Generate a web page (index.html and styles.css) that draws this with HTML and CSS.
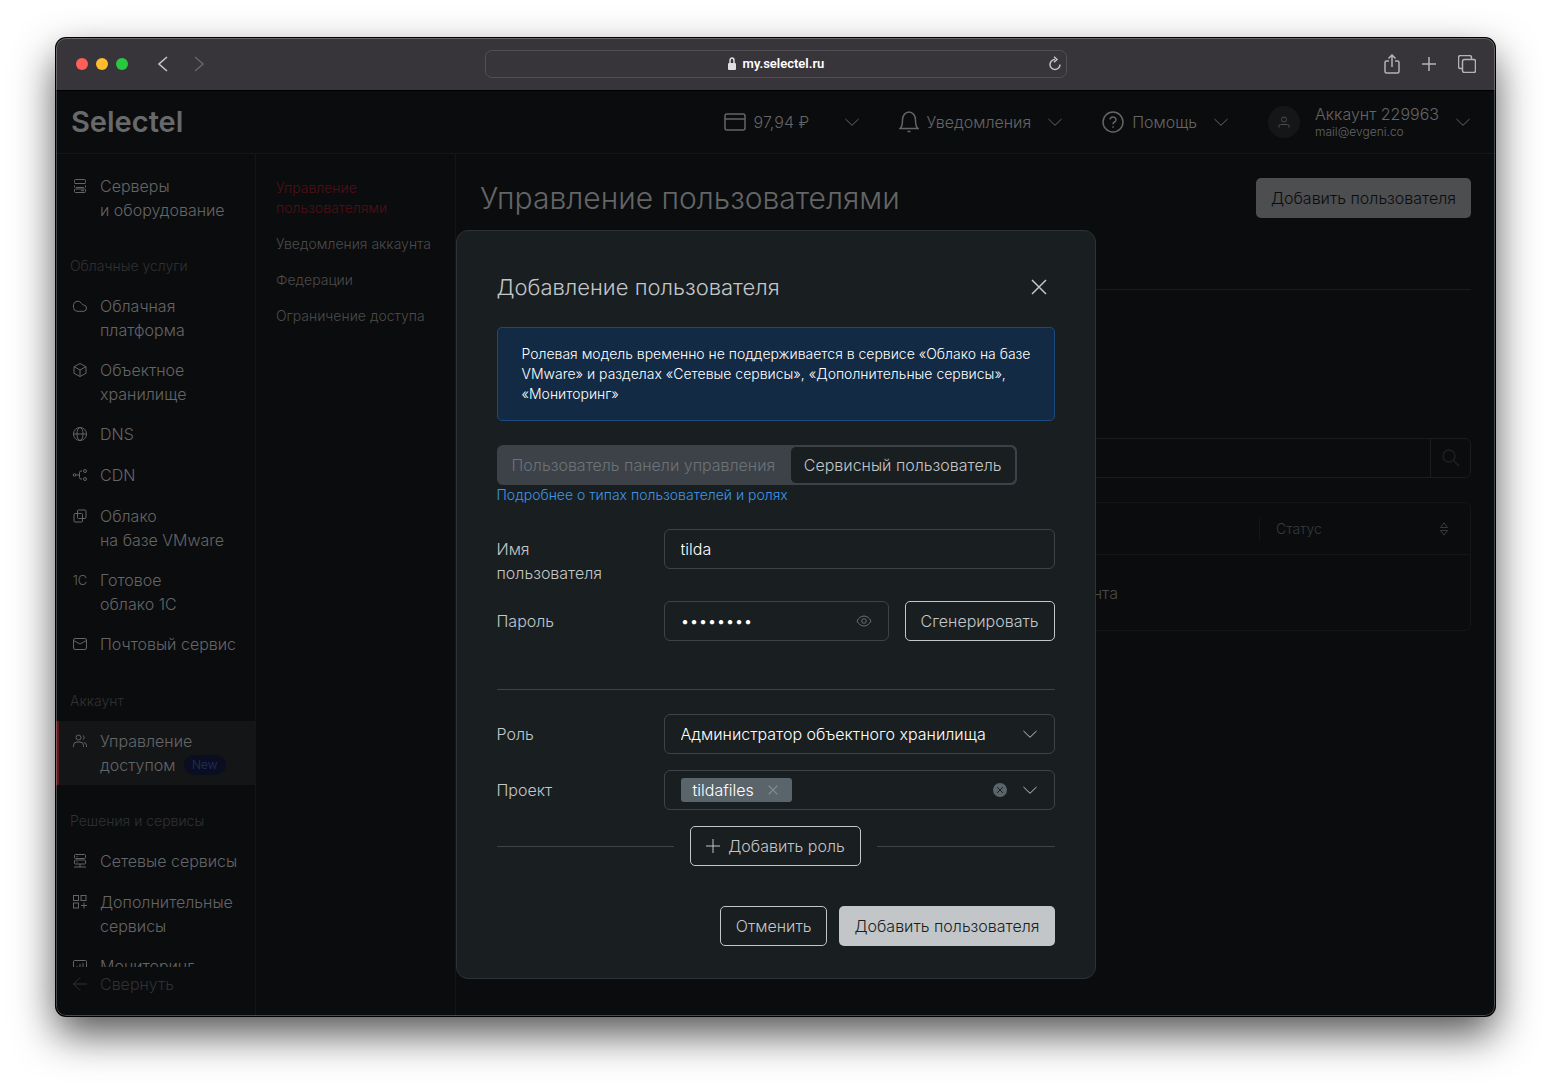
FILE: index.html
```html
<!DOCTYPE html>
<html lang="ru">
<head>
<meta charset="utf-8">
<meta name="viewport" content="width=device-width, initial-scale=1">
<title>Управление пользователями</title>
<link rel="stylesheet" href="styles.css">
</head>
<body>
<svg class="sprite" aria-hidden="true">
  <symbol id="chevron" viewBox="0 0 14 8"><path d="M.5 1L7 7.300 13.500 1"/></symbol>
  <symbol id="cross" viewBox="0 0 16 16"><path d="M1 1l14 14M15 1L1 15"/></symbol>
  <symbol id="plus" viewBox="0 0 14 14"><path d="M7 0v14M0 7h14"/></symbol>
</svg>
<div class="window">
  <div class="toolbar">
    <div class="toolbar-side">
      <span class="lights"><i class="light red"></i><i class="light yellow"></i><i class="light green"></i></span>
      <button class="tool" aria-label="Назад"><svg width="10" height="16" viewBox="0 0 10 16"><path d="M9 1L1 8l8 7"/></svg></button>
      <button class="tool tool-off" aria-label="Вперёд"><svg width="10" height="16" viewBox="0 0 10 16"><path d="M1 1l8 7-8 7"/></svg></button>
    </div>
    <div class="address">
      <span></span>
      <span class="host"><svg class="lock" width="8" height="14" viewBox="0 0 8 14"><rect x="0" y="6" width="8" height="7" rx="1"/><path d="M2 6V3.500a2 2.500 0 0 1 4 0V6"/></svg>my.selectel.ru</span>
      <button class="tool reload" aria-label="Обновить"><svg width="12" height="16" viewBox="0 0 12 16"><path d="M6 3.500a5 5 0 1 0 5 5M5 .8l3 2.700-3 2.700"/></svg></button>
    </div>
    <div class="toolbar-side toolbar-end">
      <button class="tool" aria-label="Поделиться"><svg width="16" height="20" viewBox="0 0 16 20"><path d="M5 7H2.500A1.500 1.500 0 0 0 1 8.500v9A1.500 1.500 0 0 0 2.500 19h11a1.500 1.500 0 0 0 1.500-1.500v-9A1.500 1.500 0 0 0 13.500 7H11M8 13V1M4.500 4.500L8 1l3.500 3.500"/></svg></button>
      <button class="tool" aria-label="Новая вкладка"><svg width="14" height="14"><use href="#plus"/></svg></button>
      <button class="tool" aria-label="Вкладки"><svg width="18" height="18" viewBox="0 0 18 18"><rect x="4.500" y="4.500" width="13" height="13" rx="2"/><path d="M4.500 13.500H2.500a2 2 0 0 1-2-2v-9a2 2 0 0 1 2-2h9a2 2 0 0 1 2 2v2"/></svg></button>
    </div>
  </div>

  <div class="app">
    <header class="header">
      <a class="logo" href="#">Selectel</a>
      <nav class="header-nav">
        <button class="header-item"><svg width="22" height="18" viewBox="0 0 22 18"><rect x="1" y="1" width="20" height="16" rx="2"/><path d="M1 6h20"/></svg><span class="balance">97,94 ₽</span><svg width="14" height="8"><use href="#chevron"/></svg></button>
        <button class="header-item"><svg width="20" height="22" viewBox="0 0 20 22"><path d="M1 17.500c2-1.500 2.500-3.500 2.500-8.500a6.500 8 0 0 1 13 0c0 5 .5 7 2.500 8.500zM8.500 20.500h3"/></svg><span>Уведомления</span><svg width="14" height="8"><use href="#chevron"/></svg></button>
        <button class="header-item"><svg width="22" height="22" viewBox="0 0 22 22"><circle cx="11" cy="11" r="10"/><path d="M8 8.500a3 2.700 0 1 1 4.500 2.500c-1 .6-1.500 1-1.500 2.200M11 15.200v1.600"/></svg><span>Помощь</span><svg width="14" height="8"><use href="#chevron"/></svg></button>
        <button class="header-item account"><span class="avatar"><svg width="12" height="12" viewBox="0 0 12 12"><circle cx="6" cy="3.500" r="2.500"/><path d="M1 11.500V10a1.500 1.500 0 0 1 1.500-1.500h7A1.500 1.500 0 0 1 11 10v1.500"/></svg></span><span class="account-text">Аккаунт 229963<small>mail@evgeni.co</small></span><svg width="14" height="8"><use href="#chevron"/></svg></button>
      </nav>
    </header>

    <div class="columns">
      <aside class="sidebar">
        <nav class="menu">
          <a class="menu-item" href="#"><svg width="16" height="16" viewBox="0 0 16 16"><path d="M2.500 4.500v-2a1 1 0 0 1 1-1h9a1 1 0 0 1 1 1v2M2.500 5.500h11M2.500 9.500v-2M13.500 9.500v-2M4 9.500h8M3.500 11h9a1 1 0 0 1 1 1v1.500a1 1 0 0 1-1 1h-9a1 1 0 0 1-1-1V12a1 1 0 0 1 1-1zM9 12.700h3"/></svg><span>Серверы<br>и оборудование</span></a>
          <h2 class="menu-title">Облачные услуги</h2>
          <a class="menu-item" href="#"><svg width="16" height="16" viewBox="0 0 16 16"><path d="M5 13.300a4 4 0 0 1-3.500-4V6.500A4.300 4.300 0 0 1 9.500 5.500c.5 1 1.200 1.300 2.200 1.500a3.200 3.200 0 0 1 .3 6.300z"/></svg><span>Облачная<br>платформа</span></a>
          <a class="menu-item" href="#"><svg width="16" height="16" viewBox="0 0 16 16"><path d="M8 1.500l6 3.200v6.600l-6 3.200-6-3.200V4.700zM2 4.700l6 3.300 6-3.300M8 8v6.500"/></svg><span>Объектное<br>хранилище</span></a>
          <a class="menu-item" href="#"><svg width="16" height="16" viewBox="0 0 16 16"><circle cx="8" cy="8" r="6.500"/><ellipse cx="8" cy="8" rx="3" ry="6.500"/><path d="M1.500 8h13"/></svg><span>DNS</span></a>
          <a class="menu-item" href="#"><svg width="16" height="16" viewBox="0 0 16 16"><circle cx="2.500" cy="8" r="1.300"/><circle cx="13" cy="4" r="1.500"/><circle cx="13" cy="12" r="1.500"/><path d="M4 8h3.500M10 4H9a1.500 1.500 0 0 0-1.500 1.500v5A1.500 1.500 0 0 0 9 12h1"/></svg><span>CDN</span></a>
          <a class="menu-item" href="#"><svg width="16" height="16" viewBox="0 0 16 16"><rect x="5.500" y="2" width="8.500" height="8.500" rx="1"/><rect x="2" y="5.500" width="8.500" height="8.500" rx="1"/></svg><span>Облако<br>на базе VMware</span></a>
          <a class="menu-item" href="#"><span class="glyph">1С</span><span>Готовое<br>облако 1С</span></a>
          <a class="menu-item" href="#"><svg width="16" height="16" viewBox="0 0 16 16"><rect x="1.500" y="2.500" width="13" height="11" rx="1.500"/><path d="M1.500 4.500L8 8l6.500-3.500"/></svg><span>Почтовый сервис</span></a>
          <h2 class="menu-title">Аккаунт</h2>
          <a class="menu-item active" href="#"><svg width="16" height="16" viewBox="0 0 16 16"><circle cx="6.500" cy="4.500" r="2.500"/><path d="M1.500 14v-1.500a3.500 3.500 0 0 1 3.500-3.500h3a3.500 3.500 0 0 1 3.500 3.500V14M11 2.500c1.500.5 1.500 3.500 0 4M12 9.500a3 3 0 0 1 2.500 3V14"/></svg><span>Управление<br>доступом <span class="badge">New</span></span></a>
          <h2 class="menu-title">Решения и сервисы</h2>
          <a class="menu-item" href="#"><svg width="16" height="16" viewBox="0 0 16 16"><rect x="2.500" y="1.500" width="11" height="4" rx="1"/><rect x="2.500" y="7" width="11" height="4" rx="1"/><path d="M4.500 3.500h1M4.500 9h1M8 11v3M2 14h12"/></svg><span>Сетевые сервисы</span></a>
          <a class="menu-item" href="#"><svg width="16" height="16" viewBox="0 0 16 16"><rect x="1.500" y="1.500" width="5" height="5"/><rect x="9" y="1.500" width="5" height="5"/><rect x="1.500" y="9" width="5" height="5"/><path d="M12 8.500v6M9 11.500h6"/></svg><span>Дополнительные<br>сервисы</span></a>
          <a class="menu-item" href="#"><svg width="16" height="16" viewBox="0 0 16 16"><rect x="1.500" y="2.500" width="13" height="11" rx="1"/><path d="M5 11V8M8 11V6M11 11V5"/></svg><span>Мониторинг</span></a>
        </nav>
        <button class="collapse"><svg width="16" height="16" viewBox="0 0 16 16"><path d="M15 8H1.500M8 1.500L1.500 8 8 14.500"/></svg>Свернуть</button>
      </aside>
      <nav class="submenu">
        <a class="current" href="#">Управление пользователями</a>
        <a href="#">Уведомления аккаунта</a>
        <a href="#">Федерации</a>
        <a href="#">Ограничение доступа</a>
      </nav>
      <main class="main">
        <div class="page-head">
          <h1>Управление пользователями</h1>
          <button class="button button-dim">Добавить пользователя</button>
        </div>
        <div class="tabs-line"></div>
        <form class="search">
          <input type="search" aria-label="Поиск">
          <button type="button" aria-label="Найти"><svg width="18" height="18" viewBox="0 0 18 18"><circle cx="7" cy="7" r="6"/><path d="M11.500 11.500L17 17"/></svg></button>
        </form>
        <table class="users">
          <thead><tr><th></th><th class="status"><div>Статус<svg width="10" height="14" viewBox="0 0 10 14"><path d="M5 .8L8.500 5.500h-7zM5 13.200L8.500 8.500h-7z"/></svg></div></th></tr></thead>
          <tbody><tr><td class="owner">аккаунта</td><td></td></tr></tbody>
        </table>
      </main>
    </div>

    <div class="overlay">
      <form class="modal" role="dialog" aria-labelledby="modal-title">
        <div class="modal-head">
          <h2 id="modal-title">Добавление пользователя</h2>
          <button type="button" class="close" aria-label="Закрыть"><svg width="16" height="16"><use href="#cross"/></svg></button>
        </div>
        <p class="notice">Ролевая модель временно не поддерживается в сервисе «Облако на базе VMware» и разделах «Сетевые сервисы», «Дополнительные сервисы», «Мониторинг»</p>
        <div class="segment">
          <label><input type="radio" name="kind">Пользователь панели управления</label>
          <label><input type="radio" name="kind" checked>Сервисный пользователь</label>
        </div>
        <a class="more" href="#">Подробнее о типах пользователей и ролях</a>
        <div class="rows">
          <div class="row">
            <label for="name">Имя<br>пользователя</label>
            <input class="field" id="name" type="text" value="tilda">
          </div>
          <div class="row">
            <label for="password">Пароль</label>
            <div class="password">
              <div class="field field-group">
                <input id="password" type="password" value="abcdefgh">
                <button type="button" class="eye" aria-label="Показать пароль"><svg width="16" height="12" viewBox="0 0 16 12"><path d="M1 6c1.500-3 4-5 7-5s5.500 2 7 5c-1.500 3-4 5-7 5S2.500 9 1 6z"/><circle cx="8" cy="6" r="2.300"/></svg></button>
              </div>
              <button type="button" class="button button-line">Сгенерировать</button>
            </div>
          </div>
        </div>
        <hr>
        <div class="rows">
          <div class="row">
            <label for="role">Роль</label>
            <div class="field field-group">
              <select id="role"><option>Администратор объектного хранилища</option></select>
              <svg class="arrow" width="14" height="8"><use href="#chevron"/></svg>
            </div>
          </div>
          <div class="row">
            <label for="project">Проект</label>
            <div class="field field-group">
              <span class="tag">tildafiles<button type="button" aria-label="Убрать tildafiles"><svg width="10" height="10" viewBox="0 0 16 16"><use href="#cross"/></svg></button></span>
              <input id="project" type="text">
              <button type="button" class="clear" aria-label="Очистить"><svg width="14" height="14" viewBox="0 0 14 14"><circle cx="7" cy="7" r="7"/><path d="M4 4l6 6M10 4l-6 6"/></svg></button>
              <svg class="arrow" width="14" height="8"><use href="#chevron"/></svg>
            </div>
          </div>
        </div>
        <div class="add-role"><button type="button" class="button button-line"><svg width="14" height="14"><use href="#plus"/></svg>Добавить роль</button></div>
        <div class="actions">
          <button type="button" class="button button-line">Отменить</button>
          <button type="button" class="button button-main">Добавить пользователя</button>
        </div>
      </form>
    </div>
  </div>
</div>
</body>
</html>
```
FILE: styles.css
```css
*, *::before, *::after { box-sizing: border-box; }

body {
  margin: 0;
  padding: 38px 56px 74px;
  background: #fff;
  font: 300 16px/24px Inter, "Noto Sans", sans-serif;
  color: #646566;
}

h1, h2, p { margin: 0; font-weight: 300; }
a { color: inherit; text-decoration: none; }
button, input, select { font: inherit; color: inherit; background: none; border: 0; padding: 0; margin: 0; outline: 0; }
svg { flex: none; fill: none; stroke: currentColor; display: block; }
.sprite { position: absolute; width: 0; height: 0; }

/* Browser window */
.window {
  position: relative;
  height: calc(100vh - 112px);
  min-height: 600px;
  display: flex;
  flex-direction: column;
  border-radius: 10px;
  overflow: hidden;
  background: #0b0c0e;
  box-shadow: 0 0 0 1px #000, 0 18px 42px rgba(0, 0, 0, .68);
}
.window::after {
  content: "";
  position: absolute;
  inset: 0;
  border: 1px solid rgba(255, 255, 255, .25);
  border-radius: 10px;
  pointer-events: none;
}
.toolbar {
  flex: none;
  display: grid;
  grid-template-columns: 1fr minmax(0, 582px) 1fr;
  align-items: center;
  height: 53px;
  padding: 0 19px 0 20px;
  background: #38353a;
  border-bottom: 1px solid #000;
}
.toolbar-side { display: flex; align-items: center; gap: 26px; }
.toolbar-end { justify-content: flex-end; gap: 22px; }
.tool { color: #c4c2c5; stroke-width: 1.6; }
.toolbar-end .tool { stroke-width: 1.5; color: #b4b2b5; }
.tool.tool-off { color: #656267; }
.lights { display: flex; gap: 8px; margin-right: 4px; }
.light { width: 12px; height: 12px; border-radius: 50%; }
.red { background: #ff5f57; }
.yellow { background: #febc2e; }
.green { background: #28c840; }
.address {
  display: grid;
  grid-template-columns: 1fr auto 1fr;
  align-items: center;
  height: 28px;
  padding: 0 5px;
  border: 1px solid #525055;
  border-radius: 7px;
}
.host { display: flex; align-items: center; gap: 7px; font: 600 13px/20px Roboto, sans-serif; color: #fff; }
.lock { color: #dedede; fill: #dedede; }
.lock path { fill: none; stroke-width: 1.5; }
.lock rect { stroke: none; }
.reload { justify-self: end; stroke-width: 1.5; }

/* Application */
.app { position: relative; flex: 1; min-height: 0; display: flex; flex-direction: column; }
.header {
  flex: none;
  display: flex;
  justify-content: space-between;
  align-items: center;
  height: 63px;
  padding: 0 25px 0 15px;
  border-bottom: 1px solid #151618;
}
.logo { font-size: 29px; line-height: 32px; font-weight: 600; color: #68696a; }
.header-nav { display: flex; align-items: center; gap: 40px; }
.header-item { display: flex; align-items: center; white-space: nowrap; }
.header-item > svg:first-child { margin-right: 8px; stroke-width: 1.5; }
.header-item > svg:last-child { margin-left: 17px; }
.balance { min-width: 74px; text-align: left; }
.avatar { display: grid; place-items: center; width: 32px; height: 32px; margin-right: 15px; border-radius: 50%; background: #151618; color: #4c4d4e; }
.account-text { line-height: 20px; text-align: left; }
.account-text small { display: block; font-size: 12px; line-height: 16px; }

.columns { flex: 1; min-height: 0; display: flex; }
.sidebar { flex: none; width: 200px; display: flex; flex-direction: column; border-right: 1px solid #151618; }
.menu { flex: 1; min-height: 0; overflow: hidden; padding-top: 12px; }
.menu-item { display: flex; gap: 12px; min-height: 41px; padding: 8px 0 8px 16px; white-space: nowrap; }
.menu-item > svg { margin-top: 4px; }
.glyph { width: 16px; font-size: 13px; text-align: center; }
.menu-title { padding: 26px 14px 10px; font-size: 14px; line-height: 20px; color: #303133; }
.active { padding-left: 13px; border-left: 3px solid #5c171c; background: #141517; }
.badge { display: inline-block; vertical-align: top; margin: 2px 0 2px 4px; padding: 0 8px; border-radius: 10px; background: #0a0e20; color: #22306b; font-size: 12px; line-height: 20px; }
.collapse { display: flex; align-items: center; gap: 12px; padding: 5px 16px 20px; color: #303133; }

.submenu { flex: none; width: 200px; display: flex; flex-direction: column; gap: 16px; padding: 24px 20px; border-right: 1px solid #151618; font-size: 14px; line-height: 20px; color: #4a4b4c; white-space: nowrap; }
.submenu .current { color: #4f1116; white-space: normal; }

.main { flex: 1; min-width: 0; padding: 24px; }
.page-head { display: flex; align-items: center; justify-content: space-between; }
h1 { font-size: 30px; line-height: 40px; }
.tabs-line { height: 72px; border-bottom: 1px solid #1b1c1e; }
.search { display: flex; margin-top: 148px; height: 40px; border: 1px solid #1b1c1e; border-radius: 6px; }
.search input { flex: 1; min-width: 0; }
.search button { width: 40px; display: grid; place-items: center; border-left: 1px solid #1b1c1e; color: #1f2022; stroke-width: 1.5; }
.users { width: 100%; margin-top: 24px; border: 1px solid #151618; border-radius: 6px; border-spacing: 0; table-layout: fixed; }
.users th { height: 52px; padding: 0; font-weight: 300; font-size: 14px; text-align: left; border-bottom: 1px solid #151618; color: #3a3b3c; }
.status { width: 211px; }
.status div { display: flex; justify-content: space-between; align-items: center; padding: 0 21px 0 16px; border-left: 1px solid #151618; }
.users td { height: 75px; padding: 0; color: #4a4b4c; }
.users .owner { padding-right: 141px; text-align: right; }

.button { height: 40px; display: inline-flex; align-items: center; justify-content: center; gap: 8px; padding: 0 15px; border: 0; border-radius: 5px; white-space: nowrap; }
.button-dim { background: #4d4e50; color: #0b0c0e; }
.button-line { border: 1px solid #c3c6c9; }
.button-main { background: #c3c6c9; color: #191e20; }

/* Dialog */
.overlay { position: absolute; inset: 0; display: flex; justify-content: center; align-items: flex-start; padding-top: 139px; }
.modal { width: 640px; max-width: 100%; padding: 40px 40px 32px; border: 1px solid #2c3235; border-radius: 12px; background: #191e20; color: #c3c6c9; }
.modal-head { display: flex; justify-content: space-between; align-items: center; }
.modal-head h2 { font-size: 22px; line-height: 32px; }
.close { width: 32px; height: 32px; display: grid; place-items: center; stroke-width: 1.5; }
.notice { margin: 24px 0; padding: 16px 12px 16px 24px; border: 1px solid #1a4a80; border-radius: 5px; background: #122a44; color: #fff; font-size: 14px; line-height: 20px; }
.segment { display: flex; width: 520px; max-width: 100%; height: 40px; padding: 2px; border-radius: 6px; background: #3c4248; }
.segment label { display: flex; align-items: center; padding: 0 13px; border-radius: 5px; color: #6c7278; white-space: nowrap; }
.segment label:first-child { flex: 1; }
.segment label:has(:checked) { background: #191e20; color: #c3c6c9; }
.segment input { position: absolute; opacity: 0; }
.more { display: block; margin-bottom: 24px; font-size: 14px; line-height: 20px; color: #3d97e6; }
.rows { display: grid; gap: 16px; }
.row { display: grid; grid-template-columns: 167px minmax(0, 1fr); align-items: start; }
.row > label { padding-top: 8px; }
.field { width: 100%; height: 40px; padding: 0 16px; border: 1px solid #3d4347; border-radius: 6px; color: #fff; }
.field-group { display: flex; align-items: center; gap: 16px; }
.field-group input, .field-group select { flex: 1; min-width: 0; appearance: none; }
.password { display: flex; gap: 16px; }
.password .field { flex: 1; min-width: 0; }
.eye { color: #676d72; }
.arrow { margin-right: 1px; color: #c3c6c9; }
hr { height: 1px; margin: 48px 0 24px; border: 0; background: #3d4347; }
.tag { display: flex; align-items: center; gap: 14px; height: 24px; padding: 0 14px 0 12px; border-radius: 3px; background: #5a656b; }
.tag button { color: #858d92; }
.tag svg { stroke-width: 2; }
.clear circle { fill: #5a656b; stroke: none; }
.clear path { stroke: #191e20; }
.add-role { display: flex; align-items: center; gap: 16px; margin-top: 16px; }
.add-role::before, .add-role::after { content: ""; flex: 1; height: 1px; background: #3d4347; }
.actions { display: flex; justify-content: flex-end; gap: 12px; margin-top: 40px; }
```
